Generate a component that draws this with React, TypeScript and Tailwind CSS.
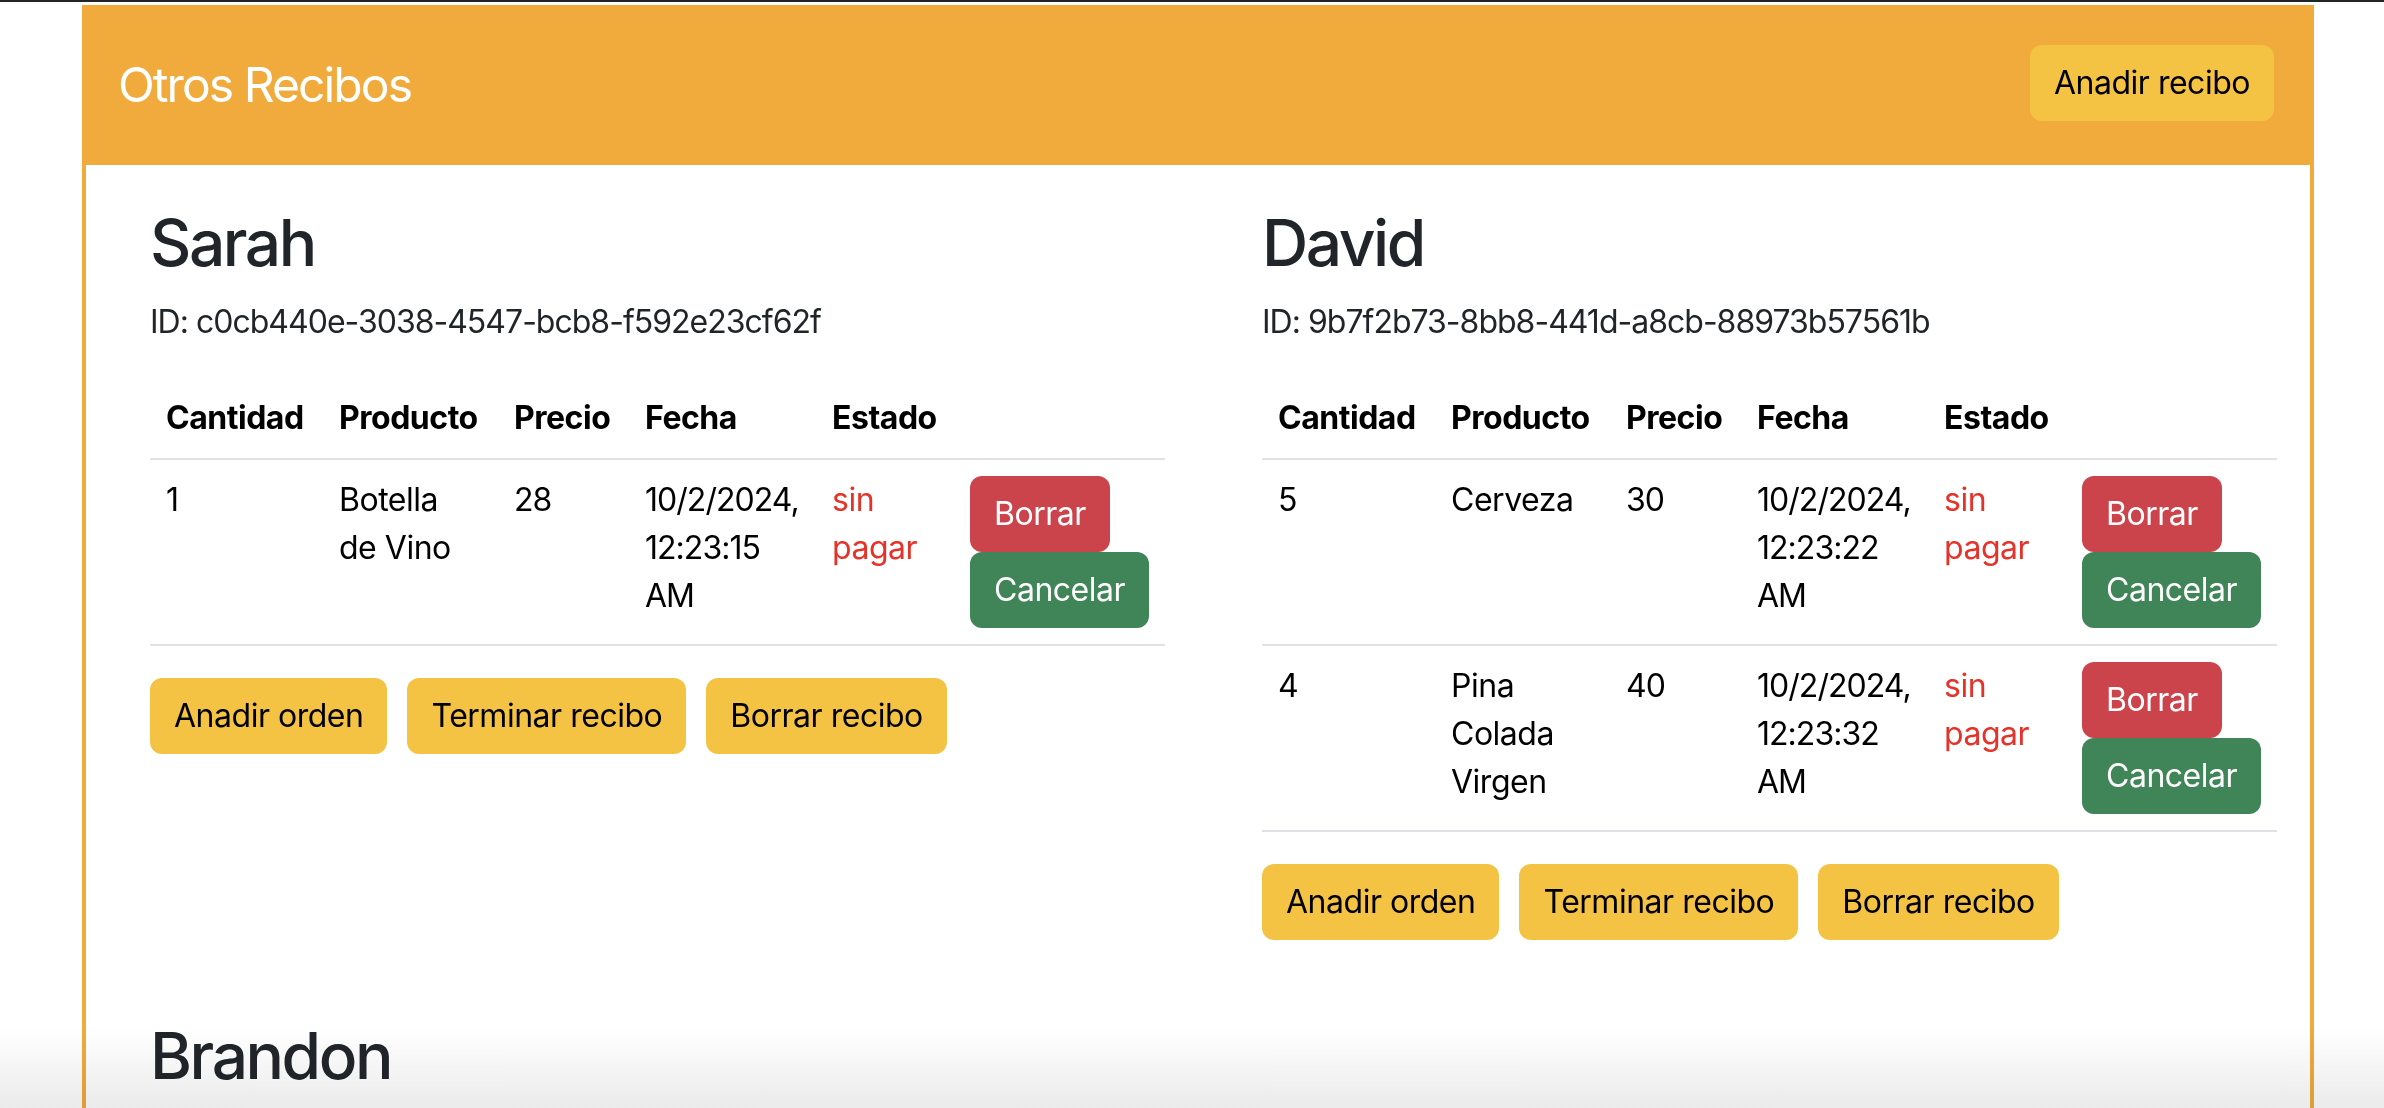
import React from "react";

type Item = {
  cantidad: string;
  producto: string;
  precio: string;
  fecha: string;
};

type Recibo = {
  nombre: string;
  id: string;
  items: Item[];
};

const recibos: Recibo[] = [
  {
    nombre: "Sarah",
    id: "c0cb440e-3038-4547-bcb8-f592e23cf62f",
    items: [
      { cantidad: "1", producto: "Botella de Vino", precio: "28", fecha: "10/2/2024, 12:23:15 AM" },
    ],
  },
  {
    nombre: "David",
    id: "9b7f2b73-8bb8-441d-a8cb-88973b57561b",
    items: [
      { cantidad: "5", producto: "Cerveza", precio: "30", fecha: "10/2/2024, 12:23:22 AM" },
      { cantidad: "4", producto: "Pina Colada Virgen", precio: "40", fecha: "10/2/2024, 12:23:32 AM" },
    ],
  },
];

function YellowButton({ children }: { children: React.ReactNode }) {
  return (
    <button className="h-[76px] rounded-[12px] bg-[#f5c344] px-[24px] text-[32px] leading-[48px] tracking-[-0.015em] text-black">
      {children}
    </button>
  );
}

function ReciboBlock({ r }: { r: Recibo }) {
  return (
    <div className="flex flex-col">
      <h2 className="mb-[16px] text-[64px] font-medium leading-[1.2] tracking-[-0.038em] text-[#212529]">{r.nombre}</h2>
      <p className="mb-[32px] text-[32px] leading-[48px] tracking-[-0.031em] text-[#212529]">ID: {r.id}</p>
      <table className="mb-[32px] w-full table-fixed border-collapse text-left text-[32px] leading-[48px] tracking-[-0.015em] text-black">
        <thead>
          <tr className="border-b-2 border-[#dee2e6]">
            <th className="w-[173px] p-[16px] font-bold">Cantidad</th>
            <th className="w-[175px] p-[16px] font-bold">Producto</th>
            <th className="w-[131px] p-[16px] font-bold">Precio</th>
            <th className="w-[187px] p-[16px] font-bold">Fecha</th>
            <th className="w-[138px] p-[16px] font-bold">Estado</th>
            <th className="p-[16px]"></th>
          </tr>
        </thead>
        <tbody>
          {r.items.map((it, i) => (
            <tr key={i} className="border-b-2 border-[#dee2e6] align-top">
              <td className="p-[16px]">{it.cantidad}</td>
              <td className="p-[16px]">{it.producto}</td>
              <td className="p-[16px] tracking-[-0.03em]">{it.precio}</td>
              <td className="p-[16px] tracking-[-0.03em]">{it.fecha}</td>
              <td className="p-[16px] text-[#e5332a]">sin pagar</td>
              <td className="p-[16px]">
                <div className="flex flex-col items-start">
                  <button className="h-[76px] rounded-[12px] bg-[#cc444b] px-[24px] text-white">Borrar</button>
                  <button className="h-[76px] rounded-[12px] bg-[#408558] px-[24px] text-white">Cancelar</button>
                </div>
              </td>
            </tr>
          ))}
        </tbody>
      </table>
      <div className="flex gap-[20px]">
        <YellowButton>Anadir orden</YellowButton>
        <YellowButton>Terminar recibo</YellowButton>
        <YellowButton>Borrar recibo</YellowButton>
      </div>
    </div>
  );
}

export default function App() {
  return (
    <div className="relative h-[1108px] w-full overflow-hidden bg-white font-['Inter',sans-serif]">
      <div className="h-[2px] w-full bg-[#222528]" />
      <div className="ml-[82px] mt-[3px] min-h-[1200px] w-[2232px] border-4 border-t-0 border-[#f0ab3c]">
        <div className="flex h-[160px] items-center justify-between bg-[#f0ab3c] pb-[4px] pl-[32px] pr-[36px]">
          <h4 className="mt-[4px] text-[48px] font-normal leading-[1.2] tracking-[-0.04em] text-white">Otros Recibos</h4>
          <YellowButton>Anadir recibo</YellowButton>
        </div>
        <div className="pl-[64px] pt-[40px]">
          <div className="grid grid-cols-[1015px_1015px] gap-x-[97px] gap-y-[78px]">
            {recibos.map((r) => (
              <ReciboBlock key={r.id} r={r} />
            ))}
            <div className="flex flex-col">
              <h2 className="mb-[16px] text-[64px] font-medium leading-[1.2] tracking-[-0.038em] text-[#212529]">Brandon</h2>
            </div>
          </div>
        </div>
      </div>
      <div className="pointer-events-none absolute bottom-0 left-0 h-[80px] w-full bg-gradient-to-b from-transparent to-[#ebebeb] mix-blend-multiply" />
    </div>
  );
}
